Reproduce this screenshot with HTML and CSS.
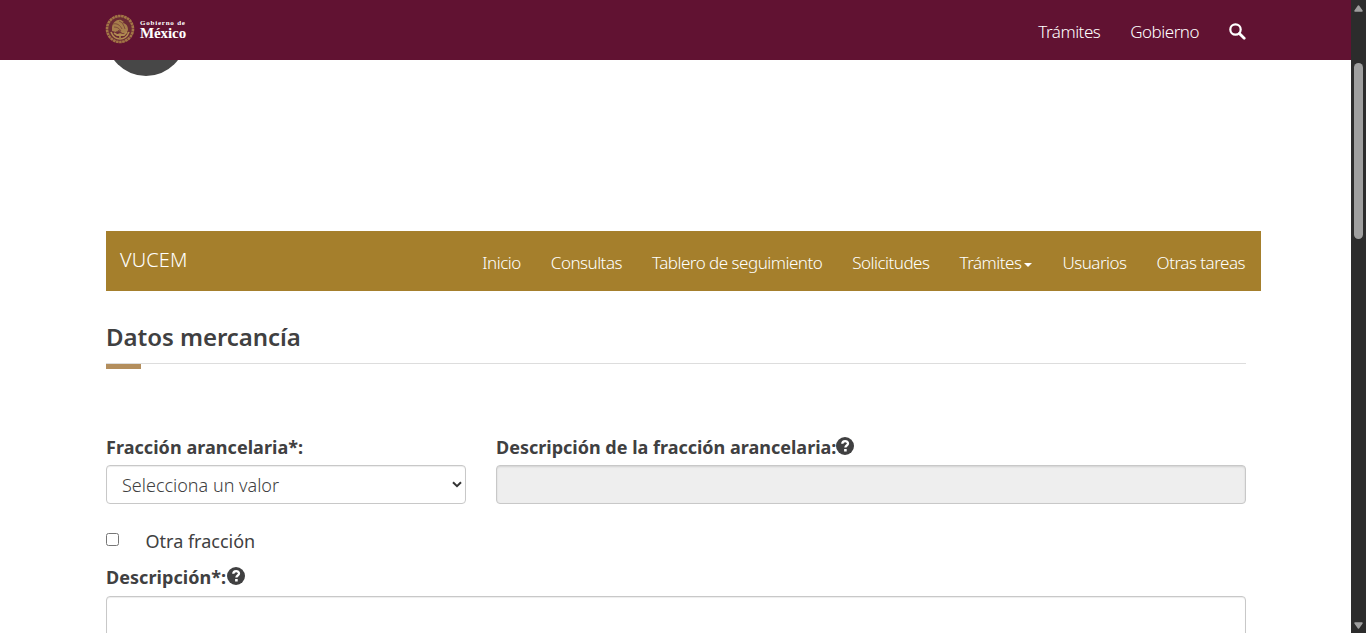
FILE: index.html
```html
<!DOCTYPE html>
<html lang="es">
<head>
<meta charset="utf-8">
<title>VUCEM</title>
<link rel="stylesheet" href="styles.css">
</head>
<body>
<div class="page">
  <header class="topbar">
    <a class="brand">
      <svg class="seal" viewBox="0 0 30 30" width="30" height="30">
        <circle cx="15" cy="15" r="13" fill="#6b2a34" stroke="#a37646" stroke-width="2.6" stroke-dasharray="2.6 .5"/>
        <path d="M7 13c1-5 5-8 9-7l3 2-2 1c4 0 6 3 6 7-1 3-3 4-6 3l-3-3-3 2-4-1z" fill="#a67e4b"/>
        <path d="M8 10c4-1 7 1 9 5M9 13c3 0 5 1 7 4M14 7c3 1 5 4 6 8M11 18l3-1 2 3" fill="none" stroke="#79433a" stroke-width=".9"/>
        <path d="M6 18c2 5 5 7 9 7s7-2 9-7M9 19l3 2 3-1 4 1 3-3M15 20v4" fill="none" stroke="#b18c51" stroke-width="1.6"/>
      </svg>
      <span class="brand-text"><span class="brand-small">Gobierno de</span><span class="brand-big">México</span></span>
    </a>
    <nav class="topnav">
      <a>Trámites</a><a>Gobierno</a>
      <svg class="search" viewBox="0 0 17 17" width="17" height="17"><circle cx="6.5" cy="6.5" r="5.2" fill="none" stroke="#fff" stroke-width="2.2"/><path d="M10.4 10.4l4.8 4.8" stroke="#fff" stroke-width="2.8" stroke-linecap="round"/></svg>
    </nav>
  </header>
  <div class="avatar-row"><svg width="72" height="16" viewBox="0 0 72 16"><circle cx="36" cy="-24" r="40" fill="#474747"/></svg></div>
  <main class="content">
    <nav class="menu">
      <a class="menu-title">VUCEM</a>
      <div class="menu-links">
        <a>Inicio</a><a>Consultas</a><a>Tablero de seguimiento</a><a>Solicitudes</a><a>Trámites<span class="caret"></span></a><a>Usuarios</a><a>Otras tareas</a>
      </div>
    </nav>
    <h1 class="title">Datos mercancía</h1>
    <div class="rule"><div class="accent"></div></div>
    <div class="fields">
      <div class="field">
        <label class="label spaced">Fracción arancelaria*:</label>
        <div class="control select"><span>Selecciona un valor</span><svg width="10" height="7" viewBox="0 0 10 7"><path d="M1 1.2l4 4 4-4" fill="none" stroke="#333" stroke-width="2"/></svg></div>
      </div>
      <div class="field">
        <label class="label">Descripción de la fracción arancelaria:</label><svg class="help" viewBox="0 0 18 18" width="18" height="18"><circle cx="9" cy="9" r="9" fill="#404041"/><path d="M6.3 6.8C6.3 3.3 12 3.3 12 6.5c0 2-2.6 2-2.6 4" fill="none" stroke="#fff" stroke-width="2.3"/><path d="M8.1 12h2.6v2.5H8.1z" fill="#fff"/></svg>
        <div class="control disabled"></div>
      </div>
    </div>
    <div class="check-row"><input type="checkbox" class="check"><span class="check-label">Otra fracción</span></div>
    <div class="description">
      <label class="label spaced">Descripción*:</label><svg class="help" viewBox="0 0 18 18" width="18" height="18"><circle cx="9" cy="9" r="9" fill="#404041"/><path d="M6.3 6.8C6.3 3.3 12 3.3 12 6.5c0 2-2.6 2-2.6 4" fill="none" stroke="#fff" stroke-width="2.3"/><path d="M8.1 12h2.6v2.5H8.1z" fill="#fff"/></svg>
      <div class="control area"></div>
    </div>
  </main>
</div>
<div class="scrollbar">
  <svg width="9" height="7" viewBox="0 0 9 7"><path d="M4.5 1L8 6H1z" fill="#9f9f9f" stroke="#9f9f9f" stroke-width="1.5" stroke-linejoin="round"/></svg>
  <div class="thumb"></div>
  <svg class="down" width="9" height="7" viewBox="0 0 9 7"><path d="M4.5 6L8 1H1z" fill="#9f9f9f" stroke="#9f9f9f" stroke-width="1.5" stroke-linejoin="round"/></svg>
</div>
</body>
</html>
```
FILE: styles.css
```css
* { box-sizing: border-box; }
body { margin: 0; display: flex; height: 633px; overflow: hidden; background: #fff; color: #404041; font-family: "Noto Sans", sans-serif; }
.page { width: 1351px; height: 633px; overflow: hidden; }
.topbar { display: flex; justify-content: space-between; height: 60px; padding: 0 105px 0 105px; background: #611232; color: #fff; }
.brand { display: flex; padding-top: 14px; gap: 5px; }
.brand-text { display: flex; flex-direction: column; padding-top: 6px; font-family: "Liberation Serif", serif; font-weight: 700; }
.brand-small { font-size: 7px; line-height: 7px; letter-spacing: .78px; white-space: nowrap; }
.brand-big { font-size: 15px; line-height: 12px; letter-spacing: -.1px; }
.topnav { display: flex; gap: 30px; padding-top: 20px; font-size: 17px; line-height: 24px; font-weight: 300; letter-spacing: -.5px; }
.search { margin-top: 3px; }
.avatar-row { height: 16px; padding-left: 110px; }
.avatar-row svg { display: block; }
.content { padding: 155px 105px 0 106px; }
.menu { display: flex; justify-content: space-between; width: 1155px; height: 60px; padding: 0 16px 0 14px; background: #a57f2c; color: #fff; font-weight: 300; }
.menu-title { padding-top: 15px; font-size: 20px; line-height: 28px; letter-spacing: .1px; }
.menu-links { display: flex; gap: 30px; padding-top: 20px; font-size: 17px; line-height: 24px; letter-spacing: -.5px; white-space: nowrap; }
.caret { display: inline-block; margin-left: 3px; border: 4px solid transparent; border-top-color: #fff; border-bottom: 0; vertical-align: 2px; }
.title { margin: 29px 0 0; height: 43px; font-size: 24px; line-height: 34px; font-weight: 600; letter-spacing: -.05px; }
.rule { height: 6px; border-top: 1px solid #ddd; }
.accent { width: 35px; height: 5px; background: #b38e5d; }
.fields { display: grid; grid-template-columns: 360px 750px; gap: 30px; margin-top: 66px; }
.label { display: inline-block; height: 30px; font-size: 18px; line-height: 25px; font-weight: 700; vertical-align: top; }
.spaced { letter-spacing: .05px; }
.help { display: inline-block; vertical-align: top; margin-top: 2px; }
.control { height: 39px; border: 1px solid #c8c8c8; border-radius: 4px; box-shadow: inset 0 1px 1px rgba(0,0,0,.075); }
.select { display: flex; justify-content: space-between; padding: 7px 3px 0 15px; font-size: 18px; line-height: 25px; font-weight: 300; }
.select svg { margin-top: 8px; }
.disabled { background: #eee; box-shadow: inset 0 1px 2px rgba(0,0,0,.12); }
.check-row { display: flex; height: 61px; padding-top: 25px; font-size: 18px; line-height: 25px; }
.check { width: 13px; height: 13px; margin: 4px 26.5px 0 0; }
.description .label { height: 31px; }
.description .help { margin-left: 1px; }
.area { height: 60px; }
.scrollbar { display: flex; flex-direction: column; align-items: center; width: 15px; height: 633px; padding: 5px 0 4px; background: #2c2c2c; }
.thumb { width: 9px; height: 176px; margin-top: 51px; border-radius: 5px; background: #9f9f9f; }
.down { margin-top: auto; }
```
